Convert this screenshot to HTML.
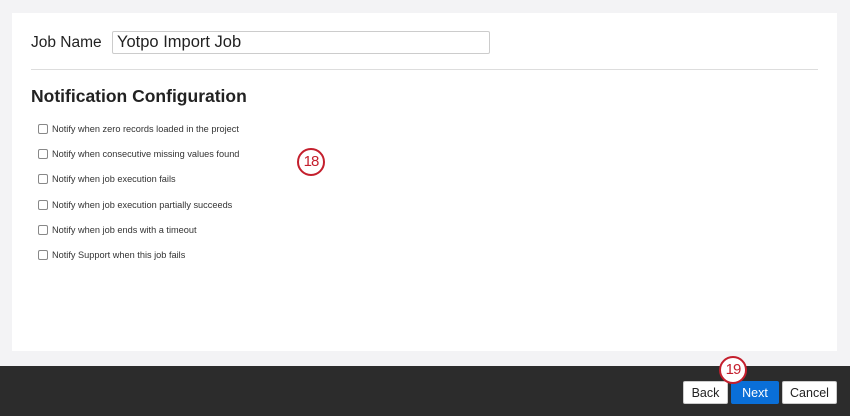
<!DOCTYPE html>
<html><head><style>
body{margin:0;width:850px;height:416px;background:#f3f3f5;position:relative;overflow:hidden;font-family:"Liberation Sans",Arial,sans-serif;color:#222}
.panel{position:absolute;left:12px;top:13px;width:825px;height:338px;background:#fff}
.foot{position:absolute;left:0;top:366px;width:850px;height:50px;background:#2c2c2c}
.lbl{position:absolute;left:31px;top:34px;font-size:15.5px;color:#222}
.inp{position:absolute;left:112px;top:31px;width:372px;height:21px;border:1px solid #ccc;border-radius:2px;font-size:16.5px;line-height:21px;padding-left:4px;box-sizing:content-box}
.hr{position:absolute;left:31px;top:69px;width:787px;height:1px;background:#ddd}
h1{position:absolute;left:31px;top:86px;margin:0;font-size:17.5px;font-weight:bold;color:#222}
.row{position:absolute;left:38px;font-size:9.2px;color:#333;height:12px;line-height:12px}
.row i{display:inline-block;width:8px;height:8px;border:1px solid #888;border-radius:2px;vertical-align:-2px;margin-right:4px;background:#fff}
.btn{position:absolute;top:381px;height:23px;border:1px solid #ccc;background:#fff;font-size:12.5px;line-height:23px;text-align:center;box-sizing:border-box;border-radius:2px;color:#222}
.badge{position:absolute;width:24px;height:24px;border:2.5px solid #c41f2d;border-radius:50%;background:#fff;color:#c41f2d;font-size:15px;line-height:24px;text-align:center;letter-spacing:-1px}
</style></head><body>
<div class="panel"></div>
<div class="lbl">Job Name</div>
<div class="inp">Yotpo Import Job</div>
<div class="hr"></div>
<h1>Notification Configuration</h1>
<div class="row" style="top:123px"><i></i>Notify when zero records loaded in the project</div>
<div class="row" style="top:148px"><i></i>Notify when consecutive missing values found</div>
<div class="row" style="top:173px"><i></i>Notify when job execution fails</div>
<div class="row" style="top:199px"><i></i>Notify when job execution partially succeeds</div>
<div class="row" style="top:224px"><i></i>Notify when job ends with a timeout</div>
<div class="row" style="top:249px"><i></i>Notify Support when this job fails</div>
<div class="badge" style="left:297px;top:148px">18</div>
<div class="foot"></div>
<div class="btn" style="left:683px;width:45px">Back</div>
<div class="btn" style="left:731px;width:48px;background:#0a6fd8;border-color:#0a6fd8;color:#fff">Next</div>
<div class="btn" style="left:782px;width:55px">Cancel</div>
<div class="badge" style="left:719px;top:356px">19</div>
</body></html>
